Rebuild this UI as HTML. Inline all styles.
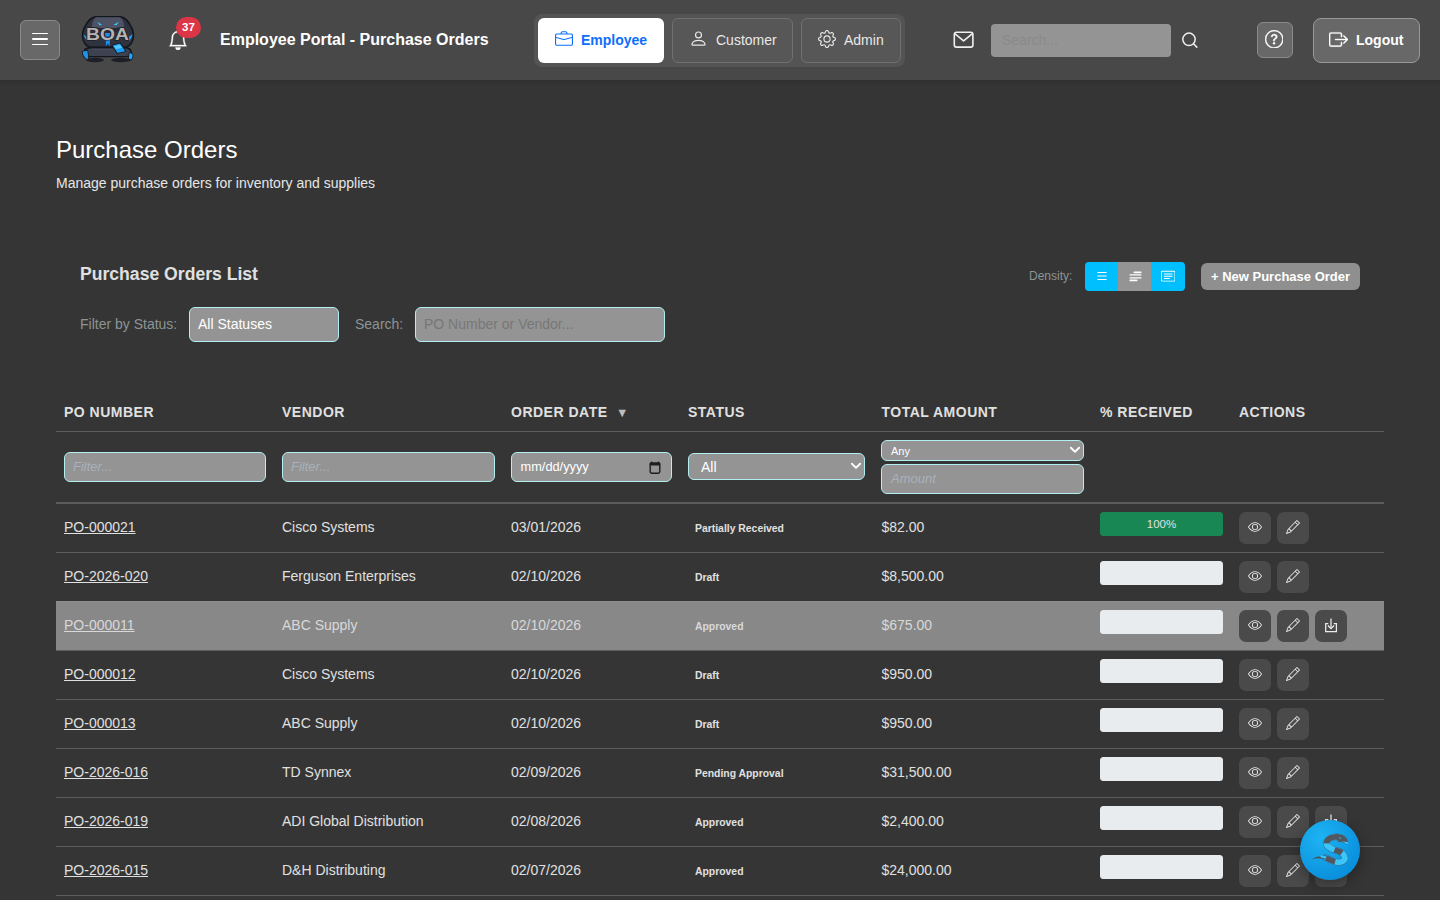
<!DOCTYPE html>
<html><head><meta charset="utf-8">
<style>
*{box-sizing:border-box;margin:0;padding:0}
html,body{width:1440px;height:900px;overflow:hidden;background:#353535;font-family:"Liberation Sans",sans-serif;color:#e0e0e0}
.abs{position:absolute}
svg{display:block}
#hdr{position:absolute;left:0;top:0;width:1440px;height:80px;background:#484848;box-shadow:0 2px 4px rgba(0,0,0,.12);z-index:2}
.hbtn{position:absolute;background:#686868;border:1px solid #8a8a8a;border-radius:6px}
.title{position:absolute;left:220px;top:31px;font-size:16px;font-weight:700;color:#fff;white-space:nowrap}
.tabs{position:absolute;left:534px;top:14px;width:371px;height:53px;background:#545454;border-radius:8px}
.tab{position:absolute;top:4px;height:45px;border-radius:6px;font-size:14px;white-space:nowrap}
.tab.act{background:#fff;color:#0d6efd;font-weight:700}
.tab.in{background:#575757;border:1px solid #707070;color:#e8e8e8}
.tab span{position:absolute;top:15px}
.tab svg{position:absolute}
#srch{position:absolute;left:991px;top:24px;width:180px;height:33px;background:#949494;border-radius:4px;font-size:14px;color:#8a8a8a;padding:8px 11px}
h1{position:absolute;left:56px;top:136px;font-size:24px;font-weight:400;color:#fff;white-space:nowrap;line-height:28px}
.sub{position:absolute;left:56px;top:175px;font-size:14px;color:#e6e6e6;white-space:nowrap}
h2{position:absolute;left:80px;top:264px;font-size:17.6px;font-weight:700;color:#e0e0e0;white-space:nowrap}
.lbl{position:absolute;font-size:14px;color:#8c9494;white-space:nowrap}
.inp{position:absolute;background:#949494;border:1px solid #b3eef1;border-radius:6px;font-size:14px;white-space:nowrap}
.dens{position:absolute;left:1085px;top:262px;width:100px;height:29px;border-radius:4px;overflow:hidden}
.dens div{position:absolute;top:0;height:29px;background:#00bfff}
.dens div.m{background:#949494}
.dens svg{position:absolute}
.newpo{position:absolute;left:1201px;top:263px;width:159px;height:27px;background:#8f8f8f;border-radius:6px;color:#fff;font-weight:700;font-size:13px;display:flex;align-items:center;justify-content:center;white-space:nowrap}
#tbl{position:absolute;left:56px;top:395px;width:1328px}
.row{position:relative;display:flex;width:1328px}
.c{flex:none;padding-left:8px;position:relative;white-space:nowrap}
.c.w5{padding-left:8.5px}
.thr{height:37px;border-bottom:1px solid #5c5c5c}
.thr .c{font-size:14px;font-weight:700;letter-spacing:0.5px;color:#e0e0e0;padding-top:9px}
.fr{height:72px;border-bottom:2px solid #5c5c5c}
.fr .inp{font-size:14px}
.br{height:49px;border-bottom:1px solid #5c5c5c;align-items:center}
.br .c{font-size:14px;color:#e0e0e0;top:-1px}
.br .c.w6,.br .c.w7{top:0}
.br.hov{background:#888;border-bottom-color:#606060;box-shadow:0 -1px 0 #8e8e8e}
.br.hov .c{color:#d8d8d8}
.w1{width:218px}.w2{width:229px}.w3{width:177px}.w4{width:193px}.w5{width:219px}.w6{width:139px}.w7{width:153px}
a{color:inherit;text-decoration:underline}
.st{font-size:10.4px;font-weight:700;padding-left:7px}
.prog{position:absolute;left:8px;top:-16px;width:123px;height:24px;border-radius:3.5px;background:#e9ecef;font-size:11.5px;color:#e0e0e0;text-align:center;line-height:24px}
.prog.g{background:#198754}
.ab{position:absolute;top:-16px;width:32px;height:32px;border-radius:7px;background:#4a4a4a;display:flex;align-items:center;justify-content:center}
.ab svg{margin-top:-2px}
.ab svg[width="32"]{margin-top:0}
.fab{position:absolute;left:1300px;top:820px;width:60px;height:60px;border-radius:50%;background:radial-gradient(circle at 35% 30%,#1db4f3,#0a8fdc 75%);box-shadow:0 4px 14px rgba(0,0,0,.35)}
.ph{font-style:italic;color:#a8b2bc;position:relative;top:0}

</style></head><body>
<div id="hdr">
  <div class="hbtn" style="left:20px;top:20px;width:40px;height:40px">
    <div class="abs" style="left:11px;top:11.6px;width:16px;height:1.5px;background:#fff;border-radius:1px"></div>
    <div class="abs" style="left:11px;top:17.2px;width:16px;height:1.5px;background:#fff;border-radius:1px"></div>
    <div class="abs" style="left:11px;top:22.7px;width:16px;height:1.5px;background:#fff;border-radius:1px"></div>
  </div>
<svg class="abs" style="left:78px;top:12px" width="60" height="54" viewBox="78 12 60 54">
<ellipse cx="95" cy="60" rx="9" ry="2.2" fill="#1d1f27"/>
<ellipse cx="121" cy="60" rx="10" ry="2.2" fill="#1d1f27"/>
<path d="M95 16 L121 16 Q128 18 131 25 Q135 31 134 38 Q133 45 127 48 L89 48 Q83 45 82 38 Q81 31 85 25 Q88 18 95 16Z" fill="#14161d"/>
<path d="M96 17.2 L120 17.2 Q126 19 129.5 25.5 Q133 31 132.6 37.5 Q131.5 44 126 46.6 L90 46.6 Q84.5 44 83.4 37.5 Q83 31 86.5 25.5 Q90 19 96 17.2Z" fill="#2f3340"/>
<path d="M96 17.2 L120 17.2 Q124 20 124 27 L108 29 L92 27 Q92 20 96 17.2Z" fill="#4d5264"/>
<path d="M92 27 L108 29 L124 27 L120 31 L108 33 L96 31Z" fill="#262a35"/>
<path d="M97.2 21.8 L102.2 25.1 L99.5 25.3 Z" fill="#3cc8ff"/>
<path d="M118.9 21.8 L113.3 25.1 L116.5 25.3 Z" fill="#3cc8ff"/>
<path d="M83.2 34.6 Q84.5 38 86.8 40.3 L86.4 36.5Z" fill="#1f95ea"/>
<path d="M132.6 34.2 Q131.6 38.5 129 41.2 L129.4 36.5Z" fill="#2aa6f5"/>
<path d="M105.6 37.6 L110 37.6 L109.6 46.2 L107.8 43.5 L106 46.2Z" fill="#1d8fe8"/>
<path d="M84 49.5 Q86 46.6 92 46.8 L124 46.8 Q130 47 131.5 50 L132.5 56 Q130 57.5 124 57.2 L92 57.2 Q85 57.5 83.5 56Z" fill="#14161d"/>
<path d="M86.5 49.8 Q88.5 48 93 48.2 L123.5 48.2 Q128.5 48.4 130 50.8 L130.6 55.3 Q128 56.2 123.5 56 L93 56 Q87.5 56.2 86 55.2Z" fill="#3d4251"/>
<path d="M93 49 L111 49 L111 49.8 L93 49.8Z" fill="#4c5160"/>
<path d="M111.5 45 L120.5 42.6 L126.5 51.6 L117 54Z" fill="#14161d"/>
<path d="M112.6 45.5 L120 43.6 L125.3 51.2 L117.5 53Z" fill="#1a9af0"/>
<path d="M114 46.3 L120 44.8 L122 47.8 L116 49.3Z" fill="#54c8ff"/>
<path d="M81.7 51 Q82 58 87.8 60.4 L89 57 L88 50 Z" fill="#14161d"/>
<path d="M82.6 51.5 Q83 57.5 87.6 59.4 L88.2 56.5 L87.4 50.8 Z" fill="#1c92e8"/>
<path d="M128.9 52.3 L133 53.5 Q134 58.5 131 60.4 L128.2 58.8Z" fill="#14161d"/>
<path d="M129.5 53 L132.4 54 Q133 58 130.8 59.6 L128.8 58.4Z" fill="#25a3f4"/>
<text x="86.1" y="40.1" font-family="Liberation Sans" font-weight="700" font-size="16.4" textLength="42.8" lengthAdjust="spacingAndGlyphs" fill="#b3b3b3" stroke="#16171c" stroke-width="1.1" paint-order="stroke">BOA</text>
<path d="M105 33 L110 33 L109.5 36.6 L105.5 36.6Z" fill="#1f8fe8"/>
</svg>
  <div class="abs" style="left:168px;top:30px"><svg width="20" height="20" viewBox="0 0 16 16" fill="#fff" stroke="#fff" stroke-width="0.25"><path d="M8 16a2 2 0 0 0 2-2H6a2 2 0 0 0 2 2M8 1.918l-.797.161A4 4 0 0 0 4 6c0 .628-.134 2.197-.459 3.742-.16.767-.376 1.566-.663 2.258h10.244c-.287-.692-.502-1.49-.663-2.258C12.134 8.197 12 6.628 12 6a4 4 0 0 0-3.203-3.92zM14.22 12c.223.447.481.801.78 1H1c.299-.199.557-.553.78-1C2.68 10.2 3 6.88 3 6c0-2.42 1.72-4.440 4.005-4.901a1 1 0 1 1 1.990 0A5 5 0 0 1 13 6c0 .880.32 4.2 1.22 6"/></svg></div>
  <div class="abs" style="left:176px;top:17px;width:25px;height:21px;border-radius:11px;background:#dc3545;color:#fff;font-size:11.5px;font-weight:700;text-align:center;line-height:21px">37</div>
  <div class="title">Employee Portal - Purchase Orders</div>
  <div class="tabs">
    <div class="tab act" style="left:4px;width:126px"><div class="abs" style="left:17px;top:12px"><svg width="18" height="18" viewBox="0 0 16 16" fill="#0d6efd"><path d="M6.5 1A1.5 1.5 0 0 0 5 2.5V3H1.5A1.5 1.5 0 0 0 0 4.5v8A1.5 1.5 0 0 0 1.5 14h13a1.5 1.5 0 0 0 1.5-1.5v-8A1.5 1.5 0 0 0 14.5 3H11v-.5A1.5 1.5 0 0 0 9.5 1zm0 1h3a.5.5 0 0 1 .5.5V3H6v-.5a.5.5 0 0 1 .5-.5m1.886 6.914L15 7.151V12.5a.5.5 0 0 1-.5.5h-13a.5.5 0 0 1-.5-.5V7.15l6.614 1.764a1.5 1.5 0 0 0 .772 0M1.5 4h13a.5.5 0 0 1 .5.5v1.616L8.129 7.948a.5.5 0 0 1-.258 0L1 6.116V4.5a.5.5 0 0 1 .5-.5"/></svg></div><span style="left:43px;top:14px">Employee</span></div>
    <div class="tab in" style="left:138px;width:121px"><div class="abs" style="left:16px;top:9.5px"><svg width="19" height="19" viewBox="0 0 16 16" fill="#e8e8e8"><path d="M8 8a3 3 0 1 0 0-6 3 3 0 0 0 0 6m2-3a2 2 0 1 1-4 0 2 2 0 0 1 4 0m4 8c0 1-1 1-1 1H3s-1 0-1-1 1-4 6-4 6 3 6 4m-1-.004c-.001-.246-.154-.986-.832-1.664C11.516 10.68 10.289 10 8 10s-3.516.68-4.168 1.332c-.678.678-.83 1.418-.832 1.664z"/></svg></div><span style="left:43px;top:13px">Customer</span></div>
    <div class="tab in" style="left:267px;width:100px"><div class="abs" style="left:16px;top:11px"><svg width="18" height="18" viewBox="0 0 16 16" fill="#e8e8e8"><path d="M8 4.754a3.246 3.246 0 1 0 0 6.492 3.246 3.246 0 0 0 0-6.492M5.754 8a2.246 2.246 0 1 1 4.492 0 2.246 2.246 0 0 1-4.492 0"/><path d="M9.796 1.343c-.527-1.79-3.065-1.790-3.592 0l-.094.319a.873.873 0 0 1-1.255.52l-.292-.16c-1.64-.892-3.433.902-2.54 2.541l.159.292a.873.873 0 0 1-.52 1.255l-.319.094c-1.79.527-1.79 3.065 0 3.592l.319.094a.873.873 0 0 1 .52 1.255l-.16.292c-.892 1.64.901 3.434 2.541 2.54l.292-.159a.873.873 0 0 1 1.255.52l.094.319c.527 1.79 3.065 1.79 3.592 0l.094-.319a.873.873 0 0 1 1.255-.52l.292.16c1.64.893 3.434-.902 2.540-2.541l-.159-.292a.873.873 0 0 1 .52-1.255l.319-.094c1.790-.527 1.790-3.065 0-3.592l-.319-.094a.873.873 0 0 1-.52-1.255l.16-.292c.893-1.640-.902-3.433-2.541-2.540l-.292.159a.873.873 0 0 1-1.255-.520zm-2.633.283c.246-.835 1.428-.835 1.674 0l.094.319a1.873 1.873 0 0 0 2.693 1.115l.291-.16c.764-.415 1.600.42 1.184 1.185l-.159.292a1.873 1.873 0 0 0 1.116 2.692l.318.094c.835.246.835 1.428 0 1.674l-.319.094a1.873 1.873 0 0 0-1.115 2.693l.16.291c.415.764-.42 1.600-1.185 1.184l-.291-.159a1.873 1.873 0 0 0-2.693 1.116l-.094.318c-.246.835-1.428.835-1.674 0l-.094-.319a1.873 1.873 0 0 0-2.692-1.115l-.292.16c-.764.415-1.6-.42-1.184-1.185l.159-.291A1.873 1.873 0 0 0 1.945 8.930l-.319-.094c-.835-.246-.835-1.428 0-1.674l.319-.094A1.873 1.873 0 0 0 3.060 4.377l-.16-.292c-.415-.764.42-1.6 1.185-1.184l.292.159a1.873 1.873 0 0 0 2.692-1.115z"/></svg></div><span style="left:42px;top:13px">Admin</span></div>
  </div>
  <svg class="abs" style="left:952.5px;top:30.5px" width="22" height="18" viewBox="0 0 22 18" fill="none" stroke="#f0f0f0" stroke-width="1.6" stroke-linejoin="round"><rect x="1.3" y="1.3" width="18.6" height="14.8" rx="2.2"/><path d="M1.8 2.6 L10.6 9.9 L19.4 2.6"/></svg>
  <div id="srch">Search...</div>
  <svg class="abs" style="left:1181px;top:31px" width="18" height="18" viewBox="0 0 18 18" fill="none" stroke="#eee" stroke-width="1.5"><circle cx="8" cy="8.3" r="6.2"/><path d="M12.5 12.8 L16.3 16.6"/></svg>
  <div class="hbtn" style="left:1257px;top:22px;width:36px;height:36px"><div class="abs" style="left:6.8px;top:6.9px"><svg width="18.5" height="18.5" viewBox="0 0 16 16" fill="#fff" stroke="#fff" stroke-width="0.25"><path d="M8 15A7 7 0 1 1 8 1a7 7 0 0 1 0 14m0 1A8 8 0 1 0 8 0a8 8 0 0 0 0 16"/><path d="M5.255 5.786a.237.237 0 0 0 .241.247h.825c.138 0 .248-.113.266-.25.09-.656.54-1.134 1.342-1.134.686 0 1.314.343 1.314 1.168 0 .635-.374.927-.965 1.371-.673.489-1.206 1.06-1.168 1.987l.003.217a.25.25 0 0 0 .25.246h.811a.25.25 0 0 0 .25-.25v-.105c0-.718.273-.927 1.01-1.486.609-.463 1.244-.977 1.244-2.056 0-1.511-1.276-2.241-2.673-2.241-1.267 0-2.655.59-2.75 2.286m1.557 5.763c0 .533.425.927 1.01.927.609 0 1.028-.394 1.028-.927 0-.552-.42-.94-1.029-.94-.584 0-1.009.388-1.009.94"/></svg></div></div>
  <div class="hbtn" style="left:1313px;top:18px;width:107px;height:45px;border-radius:8px;border-color:#999">
    <div class="abs" style="left:15px;top:11px"><svg width="19" height="19" viewBox="0 0 16 16" fill="#fff" stroke="#fff" stroke-width="0.3"><path fill-rule="evenodd" d="M10 12.5a.5.5 0 0 1-.5.5h-8a.5.5 0 0 1-.5-.5v-9a.5.5 0 0 1 .5-.5h8a.5.5 0 0 1 .5.5v2a.5.5 0 0 0 1 0v-2A1.5 1.5 0 0 0 9.5 2h-8A1.5 1.5 0 0 0 0 3.5v9A1.5 1.5 0 0 0 1.5 14h8a1.5 1.5 0 0 0 1.5-1.5v-2a.5.5 0 0 0-1 0z"/><path fill-rule="evenodd" d="M15.854 8.354a.5.5 0 0 0 0-.708l-3-3a.5.5 0 0 0-.708.708L14.293 7.5H5.5a.5.5 0 0 0 0 1h8.793l-2.147 2.146a.5.5 0 0 0 .708.708z"/></svg></div>
    <div class="abs" style="left:42px;top:13px;color:#fff;font-weight:700;font-size:14px;white-space:nowrap">Logout</div>
  </div>
</div>

<h1>Purchase Orders</h1>
<div class="sub">Manage purchase orders for inventory and supplies</div>

<h2>Purchase Orders List</h2>
<div class="lbl" style="left:80px;top:316px">Filter by Status:</div>
<div class="inp" style="left:189px;top:307px;width:150px;height:35px;color:#fff;padding:8px 0 0 8px">All Statuses</div>
<div class="lbl" style="left:355px;top:316px">Search:</div>
<div class="inp" style="left:415px;top:307px;width:250px;height:35px;color:#777;padding:8px 0 0 8px">PO Number or Vendor...</div>

<div class="lbl" style="left:1029px;top:269px;font-size:12px">Density:</div>
<div class="dens">
  <div style="left:0;width:33px"><div class="abs" style="left:10px;top:6.5px;background:none"><svg width="14" height="14" viewBox="0 0 16 16" fill="#fff"><path fill-rule="evenodd" d="M2.5 12a.5.5 0 0 1 .5-.5h10a.5.5 0 0 1 0 1H3a.5.5 0 0 1-.5-.5m0-4a.5.5 0 0 1 .5-.5h10a.5.5 0 0 1 0 1H3a.5.5 0 0 1-.5-.5m0-4a.5.5 0 0 1 .5-.5h10a.5.5 0 0 1 0 1H3a.5.5 0 0 1-.5-.5"/></svg></div></div>
  <div class="m" style="left:33px;width:33px"><div class="abs" style="left:11px;top:8px;background:none"><svg width="14" height="14" viewBox="0 0 14 14" fill="#fff"><rect x="4.5" y="1.6" width="8" height="1.6" rx=".6"/><rect x="0.5" y="4.3" width="12" height="1.3" rx=".6"/><rect x="0.5" y="7.2" width="12" height="1.3" rx=".6"/><rect x="0.5" y="9.6" width="8" height="1.6" rx=".6"/></svg></div></div>
  <div style="left:66px;width:34px"><div class="abs" style="left:10px;top:7px;background:none"><svg width="14.4" height="14.4" viewBox="0 0 16 16" fill="#fff"><path d="M14.5 3a.5.5 0 0 1 .5.5v9a.5.5 0 0 1-.5.5h-13a.5.5 0 0 1-.5-.5v-9a.5.5 0 0 1 .5-.5zm-13-1A1.5 1.5 0 0 0 0 3.5v9A1.5 1.5 0 0 0 1.5 14h13a1.5 1.5 0 0 0 1.5-1.5v-9A1.5 1.5 0 0 0 14.5 2z"/><path d="M3 5.5a.5.5 0 0 1 .5-.5h9a.5.5 0 0 1 0 1h-9a.5.5 0 0 1-.5-.5M3 8a.5.5 0 0 1 .5-.5h9a.5.5 0 0 1 0 1h-9A.5.5 0 0 1 3 8m0 2.5a.5.5 0 0 1 .5-.5h6a.5.5 0 0 1 0 1h-6a.5.5 0 0 1-.5-.5"/></svg></div></div>
</div>
<div class="newpo">+ New Purchase Order</div>

<div id="tbl">
  <div class="row thr">
    <div class="c w1">PO NUMBER</div><div class="c w2">VENDOR</div><div class="c w3">ORDER DATE <span style="color:#bdbdbd;font-size:12.5px;margin-left:4px;position:relative;top:-0.5px">&#9660;</span></div><div class="c w4">STATUS</div><div class="c w5">TOTAL AMOUNT</div><div class="c w6">% RECEIVED</div><div class="c w7">ACTIONS</div>
  </div>
  <div class="row fr">
    <div class="inp" style="left:8px;top:20px;width:202px;height:30px;padding:6px 0 0 8px;font-size:13px"><span class="ph">Filter...</span></div>
    <div class="inp" style="left:226px;top:20px;width:213px;height:30px;padding:6px 0 0 8px;font-size:13px"><span class="ph">Filter...</span></div>
    <div class="inp" style="left:455px;top:20px;width:161px;height:30px;padding:6px 0 0 8.5px;color:#fff;font-size:12.8px">mm/dd/yyyy
      <svg class="abs" style="left:136.5px;top:7.5px" width="12" height="13" viewBox="0 0 12 13"><rect x="1.2" y="2.3" width="9.6" height="9.9" rx="1.6" fill="none" stroke="#1e1e1e" stroke-width="1.4"/><rect x="0.6" y="1.6" width="10.8" height="3" rx="1" fill="#1e1e1e"/><rect x="1.8" y="0.6" width="1.5" height="2" fill="#1e1e1e"/><rect x="8.7" y="0.6" width="1.5" height="2" fill="#1e1e1e"/></svg></div>
    <div class="inp" style="left:632px;top:21px;width:177px;height:27px;padding:5px 0 0 12px;color:#fff">All<div class="abs" style="left:161px;top:6.2px"><svg width="12" height="12" viewBox="0 0 16 16" fill="none" stroke="#fff" stroke-width="2.5" stroke-linecap="round" stroke-linejoin="round"><path d="M2.5 5 L8 10.5 L13.5 5"/></svg></div></div>
    <div class="inp" style="left:825px;top:8px;width:203px;height:21px;padding:3px 0 0 9px;color:#fff;font-size:11px;padding-top:3.5px">Any<div class="abs" style="left:187px;top:3.4px"><svg width="12" height="12" viewBox="0 0 16 16" fill="none" stroke="#fff" stroke-width="2.5" stroke-linecap="round" stroke-linejoin="round"><path d="M2.5 5 L8 10.5 L13.5 5"/></svg></div></div>
    <div class="inp" style="left:825px;top:32px;width:203px;height:30px;padding:6px 0 0 9px;font-size:13px"><span class="ph">Amount</span></div>
  </div>
<div class="row br"><div class="c w1"><a>PO-000021</a></div><div class="c w2">Cisco Systems</div><div class="c w3">03/01/2026</div><div class="c w4"><span class="st">Partially Received</span></div><div class="c w5">$82.00</div><div class="c w6"><div class="prog g">100%</div></div><div class="c w7"><div class="ab" style="left:8px"><svg width="14" height="14" viewBox="0 0 16 16" fill="#ececec"><path d="M16 8s-3-5.5-8-5.5S0 8 0 8s3 5.5 8 5.5S16 8 16 8M1.173 8a13 13 0 0 1 1.66-2.043C4.12 4.668 5.88 3.5 8 3.5s3.879 1.168 5.168 2.457A13 13 0 0 1 14.828 8q-.086.13-.195.288c-.335.48-.83 1.12-1.465 1.755C11.879 11.332 10.119 12.5 8 12.5s-3.879-1.168-5.168-2.457A13 13 0 0 1 1.172 8z"/><path d="M8 5.5a2.5 2.5 0 1 0 0 5 2.5 2.5 0 0 0 0-5M4.5 8a3.5 3.5 0 1 1 7 0 3.5 3.5 0 0 1-7 0"/></svg></div><div class="ab" style="left:46px"><svg width="14" height="14" viewBox="0 0 16 16" fill="#ececec"><path d="M12.146.146a.5.5 0 0 1 .708 0l3 3a.5.5 0 0 1 0 .708l-10 10a.5.5 0 0 1-.168.11l-5 2a.5.5 0 0 1-.65-.65l2-5a.5.5 0 0 1 .11-.168zM11.207 2.5 13.5 4.793 14.793 3.5 12.5 1.207zm1.586 3L10.5 3.207 4 9.707V10h.5a.5.5 0 0 1 .5.5v.5h.5a.5.5 0 0 1 .5.5v.5h.293zm-9.761 5.175-.106.106-1.528 3.821 3.821-1.528.106-.106A.5.5 0 0 1 5 12.5V12h-.5a.5.5 0 0 1-.5-.5V11h-.5a.5.5 0 0 1-.468-.325"/></svg></div></div></div>
<div class="row br"><div class="c w1"><a>PO-2026-020</a></div><div class="c w2">Ferguson Enterprises</div><div class="c w3">02/10/2026</div><div class="c w4"><span class="st">Draft</span></div><div class="c w5">$8,500.00</div><div class="c w6"><div class="prog"></div></div><div class="c w7"><div class="ab" style="left:8px"><svg width="14" height="14" viewBox="0 0 16 16" fill="#ececec"><path d="M16 8s-3-5.5-8-5.5S0 8 0 8s3 5.5 8 5.5S16 8 16 8M1.173 8a13 13 0 0 1 1.66-2.043C4.12 4.668 5.88 3.5 8 3.5s3.879 1.168 5.168 2.457A13 13 0 0 1 14.828 8q-.086.13-.195.288c-.335.48-.83 1.12-1.465 1.755C11.879 11.332 10.119 12.5 8 12.5s-3.879-1.168-5.168-2.457A13 13 0 0 1 1.172 8z"/><path d="M8 5.5a2.5 2.5 0 1 0 0 5 2.5 2.5 0 0 0 0-5M4.5 8a3.5 3.5 0 1 1 7 0 3.5 3.5 0 0 1-7 0"/></svg></div><div class="ab" style="left:46px"><svg width="14" height="14" viewBox="0 0 16 16" fill="#ececec"><path d="M12.146.146a.5.5 0 0 1 .708 0l3 3a.5.5 0 0 1 0 .708l-10 10a.5.5 0 0 1-.168.11l-5 2a.5.5 0 0 1-.65-.65l2-5a.5.5 0 0 1 .11-.168zM11.207 2.5 13.5 4.793 14.793 3.5 12.5 1.207zm1.586 3L10.5 3.207 4 9.707V10h.5a.5.5 0 0 1 .5.5v.5h.5a.5.5 0 0 1 .5.5v.5h.293zm-9.761 5.175-.106.106-1.528 3.821 3.821-1.528.106-.106A.5.5 0 0 1 5 12.5V12h-.5a.5.5 0 0 1-.5-.5V11h-.5a.5.5 0 0 1-.468-.325"/></svg></div></div></div>
<div class="row br hov"><div class="c w1"><a>PO-000011</a></div><div class="c w2">ABC Supply</div><div class="c w3">02/10/2026</div><div class="c w4"><span class="st">Approved</span></div><div class="c w5">$675.00</div><div class="c w6"><div class="prog"></div></div><div class="c w7"><div class="ab" style="left:8px"><svg width="14" height="14" viewBox="0 0 16 16" fill="#ececec"><path d="M16 8s-3-5.5-8-5.5S0 8 0 8s3 5.5 8 5.5S16 8 16 8M1.173 8a13 13 0 0 1 1.66-2.043C4.12 4.668 5.88 3.5 8 3.5s3.879 1.168 5.168 2.457A13 13 0 0 1 14.828 8q-.086.13-.195.288c-.335.48-.83 1.12-1.465 1.755C11.879 11.332 10.119 12.5 8 12.5s-3.879-1.168-5.168-2.457A13 13 0 0 1 1.172 8z"/><path d="M8 5.5a2.5 2.5 0 1 0 0 5 2.5 2.5 0 0 0 0-5M4.5 8a3.5 3.5 0 1 1 7 0 3.5 3.5 0 0 1-7 0"/></svg></div><div class="ab" style="left:46px"><svg width="14" height="14" viewBox="0 0 16 16" fill="#ececec"><path d="M12.146.146a.5.5 0 0 1 .708 0l3 3a.5.5 0 0 1 0 .708l-10 10a.5.5 0 0 1-.168.11l-5 2a.5.5 0 0 1-.65-.65l2-5a.5.5 0 0 1 .11-.168zM11.207 2.5 13.5 4.793 14.793 3.5 12.5 1.207zm1.586 3L10.5 3.207 4 9.707V10h.5a.5.5 0 0 1 .5.5v.5h.5a.5.5 0 0 1 .5.5v.5h.293zm-9.761 5.175-.106.106-1.528 3.821 3.821-1.528.106-.106A.5.5 0 0 1 5 12.5V12h-.5a.5.5 0 0 1-.5-.5V11h-.5a.5.5 0 0 1-.468-.325"/></svg></div><div class="ab" style="left:84px"><svg width="32" height="32" viewBox="0 0 32 32" fill="none" stroke="#ececec" stroke-width="1.25"><path d="M13.3 13.6 H10.7 V21.6 H21.4 V13.6 H18.7"/><path d="M16 8.6 V18.4"/><path d="M12.9 15.5 L16 18.6 L19.1 15.5"/></svg></div></div></div>
<div class="row br"><div class="c w1"><a>PO-000012</a></div><div class="c w2">Cisco Systems</div><div class="c w3">02/10/2026</div><div class="c w4"><span class="st">Draft</span></div><div class="c w5">$950.00</div><div class="c w6"><div class="prog"></div></div><div class="c w7"><div class="ab" style="left:8px"><svg width="14" height="14" viewBox="0 0 16 16" fill="#ececec"><path d="M16 8s-3-5.5-8-5.5S0 8 0 8s3 5.5 8 5.5S16 8 16 8M1.173 8a13 13 0 0 1 1.66-2.043C4.12 4.668 5.88 3.5 8 3.5s3.879 1.168 5.168 2.457A13 13 0 0 1 14.828 8q-.086.13-.195.288c-.335.48-.83 1.12-1.465 1.755C11.879 11.332 10.119 12.5 8 12.5s-3.879-1.168-5.168-2.457A13 13 0 0 1 1.172 8z"/><path d="M8 5.5a2.5 2.5 0 1 0 0 5 2.5 2.5 0 0 0 0-5M4.5 8a3.5 3.5 0 1 1 7 0 3.5 3.5 0 0 1-7 0"/></svg></div><div class="ab" style="left:46px"><svg width="14" height="14" viewBox="0 0 16 16" fill="#ececec"><path d="M12.146.146a.5.5 0 0 1 .708 0l3 3a.5.5 0 0 1 0 .708l-10 10a.5.5 0 0 1-.168.11l-5 2a.5.5 0 0 1-.65-.65l2-5a.5.5 0 0 1 .11-.168zM11.207 2.5 13.5 4.793 14.793 3.5 12.5 1.207zm1.586 3L10.5 3.207 4 9.707V10h.5a.5.5 0 0 1 .5.5v.5h.5a.5.5 0 0 1 .5.5v.5h.293zm-9.761 5.175-.106.106-1.528 3.821 3.821-1.528.106-.106A.5.5 0 0 1 5 12.5V12h-.5a.5.5 0 0 1-.5-.5V11h-.5a.5.5 0 0 1-.468-.325"/></svg></div></div></div>
<div class="row br"><div class="c w1"><a>PO-000013</a></div><div class="c w2">ABC Supply</div><div class="c w3">02/10/2026</div><div class="c w4"><span class="st">Draft</span></div><div class="c w5">$950.00</div><div class="c w6"><div class="prog"></div></div><div class="c w7"><div class="ab" style="left:8px"><svg width="14" height="14" viewBox="0 0 16 16" fill="#ececec"><path d="M16 8s-3-5.5-8-5.5S0 8 0 8s3 5.5 8 5.5S16 8 16 8M1.173 8a13 13 0 0 1 1.66-2.043C4.12 4.668 5.88 3.5 8 3.5s3.879 1.168 5.168 2.457A13 13 0 0 1 14.828 8q-.086.13-.195.288c-.335.48-.83 1.12-1.465 1.755C11.879 11.332 10.119 12.5 8 12.5s-3.879-1.168-5.168-2.457A13 13 0 0 1 1.172 8z"/><path d="M8 5.5a2.5 2.5 0 1 0 0 5 2.5 2.5 0 0 0 0-5M4.5 8a3.5 3.5 0 1 1 7 0 3.5 3.5 0 0 1-7 0"/></svg></div><div class="ab" style="left:46px"><svg width="14" height="14" viewBox="0 0 16 16" fill="#ececec"><path d="M12.146.146a.5.5 0 0 1 .708 0l3 3a.5.5 0 0 1 0 .708l-10 10a.5.5 0 0 1-.168.11l-5 2a.5.5 0 0 1-.65-.65l2-5a.5.5 0 0 1 .11-.168zM11.207 2.5 13.5 4.793 14.793 3.5 12.5 1.207zm1.586 3L10.5 3.207 4 9.707V10h.5a.5.5 0 0 1 .5.5v.5h.5a.5.5 0 0 1 .5.5v.5h.293zm-9.761 5.175-.106.106-1.528 3.821 3.821-1.528.106-.106A.5.5 0 0 1 5 12.5V12h-.5a.5.5 0 0 1-.5-.5V11h-.5a.5.5 0 0 1-.468-.325"/></svg></div></div></div>
<div class="row br"><div class="c w1"><a>PO-2026-016</a></div><div class="c w2">TD Synnex</div><div class="c w3">02/09/2026</div><div class="c w4"><span class="st">Pending Approval</span></div><div class="c w5">$31,500.00</div><div class="c w6"><div class="prog"></div></div><div class="c w7"><div class="ab" style="left:8px"><svg width="14" height="14" viewBox="0 0 16 16" fill="#ececec"><path d="M16 8s-3-5.5-8-5.5S0 8 0 8s3 5.5 8 5.5S16 8 16 8M1.173 8a13 13 0 0 1 1.66-2.043C4.12 4.668 5.88 3.5 8 3.5s3.879 1.168 5.168 2.457A13 13 0 0 1 14.828 8q-.086.13-.195.288c-.335.48-.83 1.12-1.465 1.755C11.879 11.332 10.119 12.5 8 12.5s-3.879-1.168-5.168-2.457A13 13 0 0 1 1.172 8z"/><path d="M8 5.5a2.5 2.5 0 1 0 0 5 2.5 2.5 0 0 0 0-5M4.5 8a3.5 3.5 0 1 1 7 0 3.5 3.5 0 0 1-7 0"/></svg></div><div class="ab" style="left:46px"><svg width="14" height="14" viewBox="0 0 16 16" fill="#ececec"><path d="M12.146.146a.5.5 0 0 1 .708 0l3 3a.5.5 0 0 1 0 .708l-10 10a.5.5 0 0 1-.168.11l-5 2a.5.5 0 0 1-.65-.65l2-5a.5.5 0 0 1 .11-.168zM11.207 2.5 13.5 4.793 14.793 3.5 12.5 1.207zm1.586 3L10.5 3.207 4 9.707V10h.5a.5.5 0 0 1 .5.5v.5h.5a.5.5 0 0 1 .5.5v.5h.293zm-9.761 5.175-.106.106-1.528 3.821 3.821-1.528.106-.106A.5.5 0 0 1 5 12.5V12h-.5a.5.5 0 0 1-.5-.5V11h-.5a.5.5 0 0 1-.468-.325"/></svg></div></div></div>
<div class="row br"><div class="c w1"><a>PO-2026-019</a></div><div class="c w2">ADI Global Distribution</div><div class="c w3">02/08/2026</div><div class="c w4"><span class="st">Approved</span></div><div class="c w5">$2,400.00</div><div class="c w6"><div class="prog"></div></div><div class="c w7"><div class="ab" style="left:8px"><svg width="14" height="14" viewBox="0 0 16 16" fill="#ececec"><path d="M16 8s-3-5.5-8-5.5S0 8 0 8s3 5.5 8 5.5S16 8 16 8M1.173 8a13 13 0 0 1 1.66-2.043C4.12 4.668 5.88 3.5 8 3.5s3.879 1.168 5.168 2.457A13 13 0 0 1 14.828 8q-.086.13-.195.288c-.335.48-.83 1.12-1.465 1.755C11.879 11.332 10.119 12.5 8 12.5s-3.879-1.168-5.168-2.457A13 13 0 0 1 1.172 8z"/><path d="M8 5.5a2.5 2.5 0 1 0 0 5 2.5 2.5 0 0 0 0-5M4.5 8a3.5 3.5 0 1 1 7 0 3.5 3.5 0 0 1-7 0"/></svg></div><div class="ab" style="left:46px"><svg width="14" height="14" viewBox="0 0 16 16" fill="#ececec"><path d="M12.146.146a.5.5 0 0 1 .708 0l3 3a.5.5 0 0 1 0 .708l-10 10a.5.5 0 0 1-.168.11l-5 2a.5.5 0 0 1-.65-.65l2-5a.5.5 0 0 1 .11-.168zM11.207 2.5 13.5 4.793 14.793 3.5 12.5 1.207zm1.586 3L10.5 3.207 4 9.707V10h.5a.5.5 0 0 1 .5.5v.5h.5a.5.5 0 0 1 .5.5v.5h.293zm-9.761 5.175-.106.106-1.528 3.821 3.821-1.528.106-.106A.5.5 0 0 1 5 12.5V12h-.5a.5.5 0 0 1-.5-.5V11h-.5a.5.5 0 0 1-.468-.325"/></svg></div><div class="ab" style="left:84px"><svg width="32" height="32" viewBox="0 0 32 32" fill="none" stroke="#ececec" stroke-width="1.25"><path d="M13.3 13.6 H10.7 V21.6 H21.4 V13.6 H18.7"/><path d="M16 8.6 V18.4"/><path d="M12.9 15.5 L16 18.6 L19.1 15.5"/></svg></div></div></div>
<div class="row br"><div class="c w1"><a>PO-2026-015</a></div><div class="c w2">D&amp;H Distributing</div><div class="c w3">02/07/2026</div><div class="c w4"><span class="st">Approved</span></div><div class="c w5">$24,000.00</div><div class="c w6"><div class="prog"></div></div><div class="c w7"><div class="ab" style="left:8px"><svg width="14" height="14" viewBox="0 0 16 16" fill="#ececec"><path d="M16 8s-3-5.5-8-5.5S0 8 0 8s3 5.5 8 5.5S16 8 16 8M1.173 8a13 13 0 0 1 1.66-2.043C4.12 4.668 5.88 3.5 8 3.5s3.879 1.168 5.168 2.457A13 13 0 0 1 14.828 8q-.086.13-.195.288c-.335.48-.83 1.12-1.465 1.755C11.879 11.332 10.119 12.5 8 12.5s-3.879-1.168-5.168-2.457A13 13 0 0 1 1.172 8z"/><path d="M8 5.5a2.5 2.5 0 1 0 0 5 2.5 2.5 0 0 0 0-5M4.5 8a3.5 3.5 0 1 1 7 0 3.5 3.5 0 0 1-7 0"/></svg></div><div class="ab" style="left:46px"><svg width="14" height="14" viewBox="0 0 16 16" fill="#ececec"><path d="M12.146.146a.5.5 0 0 1 .708 0l3 3a.5.5 0 0 1 0 .708l-10 10a.5.5 0 0 1-.168.11l-5 2a.5.5 0 0 1-.65-.65l2-5a.5.5 0 0 1 .11-.168zM11.207 2.5 13.5 4.793 14.793 3.5 12.5 1.207zm1.586 3L10.5 3.207 4 9.707V10h.5a.5.5 0 0 1 .5.5v.5h.5a.5.5 0 0 1 .5.5v.5h.293zm-9.761 5.175-.106.106-1.528 3.821 3.821-1.528.106-.106A.5.5 0 0 1 5 12.5V12h-.5a.5.5 0 0 1-.5-.5V11h-.5a.5.5 0 0 1-.468-.325"/></svg></div><div class="ab" style="left:84px"><svg width="32" height="32" viewBox="0 0 32 32" fill="none" stroke="#ececec" stroke-width="1.25"><path d="M13.3 13.6 H10.7 V21.6 H21.4 V13.6 H18.7"/><path d="M16 8.6 V18.4"/><path d="M12.9 15.5 L16 18.6 L19.1 15.5"/></svg></div></div></div>
</div>
<div class="fab"><svg width="60" height="60" viewBox="0 0 60 60">
<path d="M26 38.6 C21 35.4 16 35.8 11.8 39.6 C16.5 37.6 21 37.8 25 40.4Z" fill="#4a505b"/>
<path d="M44 19.5 C40 15.6 29 15.8 26.6 22 C25 27 32 29 38 31 C45 33.5 47 39 42.5 41.5 C37.5 44 31.5 40.5 25.5 37.6" fill="none" stroke="#2f6f9a" stroke-width="6.6" stroke-linecap="round"/>
<path d="M44 19.5 C40 15.6 29 15.8 26.6 22 C25 27 32 29 38 31 C45 33.5 47 39 42.5 41.5 C37.5 44 31.5 40.5 25.5 37.6" fill="none" stroke="#3cc6f8" stroke-width="5.6" stroke-linecap="butt"/>
<path d="M44 19.5 C40 15.6 29 15.8 26.6 22 C25 27 32 29 38 31 C45 33.5 47 39 42.5 41.5 C37.5 44 31.5 40.5 25.5 37.6" fill="none" stroke="#51565f" stroke-width="5.6" stroke-dasharray="21 11 8 18 10 100"/>
<path d="M25.5 36 L20 35.4 L21 37.6 L26 38.6Z" fill="#3cc6f8"/>
<path d="M38 15.3 Q45 15.6 47.5 20.5 L48.2 22.6 L45 22 Q42 21.5 38 22Z" fill="#51565f"/>
<path d="M38.9 17.1 L41.3 18 L40.2 19 Z" fill="#3cc6f8"/>
<path d="M42 21.3 L47.5 22.3 L48 24 L46 23 Z" fill="#6fd3ff"/>
</svg></div>


</body></html>
